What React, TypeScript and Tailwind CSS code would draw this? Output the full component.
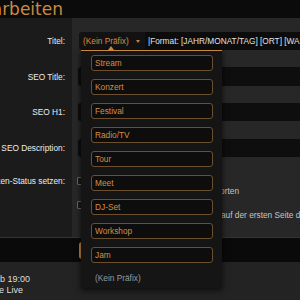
const prefixes = [
  "Stream",
  "Konzert",
  "Festival",
  "Radio/TV",
  "Tour",
  "Meet",
  "DJ-Set",
  "Workshop",
  "Jam",
];

function Label({ text }: { text: string }) {
  return (
    <div className="w-full flex justify-end whitespace-nowrap pr-[7px] text-[#ececec]">
      {text}
    </div>
  );
}

function Checkbox() {
  return (
    <span className="ml-[5px] inline-block w-[8px] h-[8px] rounded-[1px] border border-[#6a6a6a] bg-[#1a1a1a] shrink-0" />
  );
}

export default function App() {
  return (
    <div className="relative w-[300px] h-[300px] overflow-hidden bg-[#232323] font-['Liberation_Sans',Arial,sans-serif] text-[8.3px] leading-[10px]">
      {/* header */}
      <div className="h-[18px] bg-[#0b0b0b] flex items-center">
        <div className="w-[63px] shrink-0 flex justify-end whitespace-nowrap font-['DejaVu_Sans',sans-serif] text-[17px] leading-[18px] text-[#c98a44]">
          Event bearbeiten
        </div>
      </div>

      {/* form */}
      <div className="grid grid-cols-[72px_1fr]">
        {/* Titel */}
        <div className="bg-[#1b1b1b] h-[32px] pt-[14px]">
          <div className="h-[18px] flex items-center">
            <Label text="Titel:" />
          </div>
        </div>
        <div className="bg-[#272727] h-[32px] pt-[14px]">
          <div className="h-[18px] ml-[7px] flex">
            <div className="w-[66px] h-full bg-[#121212] rounded-l-[3px] flex items-center pl-[4px] text-[#d68d3f]">
              <span className="whitespace-nowrap">(Kein Präfix)</span>
              <span className="ml-[7px] w-0 h-0 border-l-[2.5px] border-r-[2.5px] border-t-[3px] border-l-transparent border-r-transparent border-t-[#c0843e]" />
            </div>
            <div className="flex-1 h-full bg-[#0c0c0c] flex items-center pl-[3px] whitespace-nowrap text-[#e2e2e2]">
              |Format: [JAHR/MONAT/TAG] [ORT] [WAS]
            </div>
          </div>
        </div>

        {/* SEO Title */}
        <div className="bg-[#1b1b1b] h-[36px] pt-[17px]">
          <div className="h-[19px] flex items-center">
            <Label text="SEO Title:" />
          </div>
        </div>
        <div className="bg-[#272727] h-[36px] pt-[17px]">
          <div className="ml-[6px] h-[19px] bg-[#0e0e0e] rounded-l-[3px]" />
        </div>

        {/* SEO H1 */}
        <div className="bg-[#1b1b1b] h-[35px] pt-[17px]">
          <div className="h-[18px] flex items-center">
            <Label text="SEO H1:" />
          </div>
        </div>
        <div className="bg-[#272727] h-[35px] pt-[17px]">
          <div className="ml-[6px] h-[18px] bg-[#0e0e0e] rounded-l-[3px]" />
        </div>

        {/* SEO Description */}
        <div className="bg-[#1b1b1b] h-[36px] pt-[18px]">
          <div className="h-[18px] flex items-center">
            <Label text="SEO Description:" />
          </div>
        </div>
        <div className="bg-[#272727] h-[36px] pt-[18px]">
          <div className="ml-[6px] h-[18px] bg-[#0e0e0e] rounded-l-[3px]" />
        </div>

        {/* Status */}
        <div className="bg-[#1b1b1b] h-[38px] pt-[19px]">
          <Label text="Seiten-Status setzen:" />
        </div>
        <div className="bg-[#272727] h-[38px] pt-[19px] text-[#c4c4c4] whitespace-nowrap">
          <div className="flex items-center h-[10px]">
            <Checkbox />
          </div>
          <div className="w-[167px] h-[10px] flex justify-end">Antworten</div>
        </div>

        <div className="bg-[#1b1b1b] h-[42px]" />
        <div className="bg-[#272727] h-[42px] pt-[5px] text-[#c4c4c4] whitespace-nowrap">
          <div className="flex items-center h-[10px]">
            <Checkbox />
          </div>
          <div className="flex h-[10px]">
            <span className="w-[147px] shrink-0 flex justify-end">oben</span>
            <span className="ml-[2px]">auf der ersten Seite des Blogs</span>
          </div>
        </div>
      </div>

      {/* action bar */}
      <div className="border-t border-[#333333] h-[25px] bg-[#0a0a0a] flex items-center">
        <button
          aria-label="Speichern"
          className="ml-[79px] w-[60px] h-[17px] rounded-[3px] bg-[#c8873e]"
        />
      </div>

      {/* bottom info */}
      <div className="pt-[12px] text-[9px] leading-[11px] text-[#dedede]">
        <div className="w-[30px] flex justify-end whitespace-nowrap">
          Sa., 14. Feb 19:00
        </div>
        <div className="w-[23px] flex justify-end whitespace-nowrap">
          Seite Live
        </div>
      </div>

      {/* prefix dropdown */}
      <div className="absolute left-[81px] top-[50px] w-[141px] h-[238px] bg-[#151515] border-t border-[#c8873e] shadow-[0_2px_6px_rgba(0,0,0,0.7)]">
        <span className="absolute -top-[5px] left-[27px] w-0 h-0 border-l-[3.5px] border-r-[3.5px] border-b-[4px] border-l-transparent border-r-transparent border-b-[#c8873e]" />
        <div className="flex flex-col gap-[8px] pt-[4px] pl-[10px]">
          {prefixes.map((p) => (
            <div
              key={p}
              className="w-[122px] h-[16px] rounded-[3px] border border-[#6b4f2f] bg-[#0d0d0d] flex items-center pl-[3px] text-[#d68d3f]"
            >
              {p}
            </div>
          ))}
        </div>
        <div className="pl-[14px] pt-[10px] text-[#9a9a9a]">(Kein Präfix)</div>
      </div>
    </div>
  );
}
